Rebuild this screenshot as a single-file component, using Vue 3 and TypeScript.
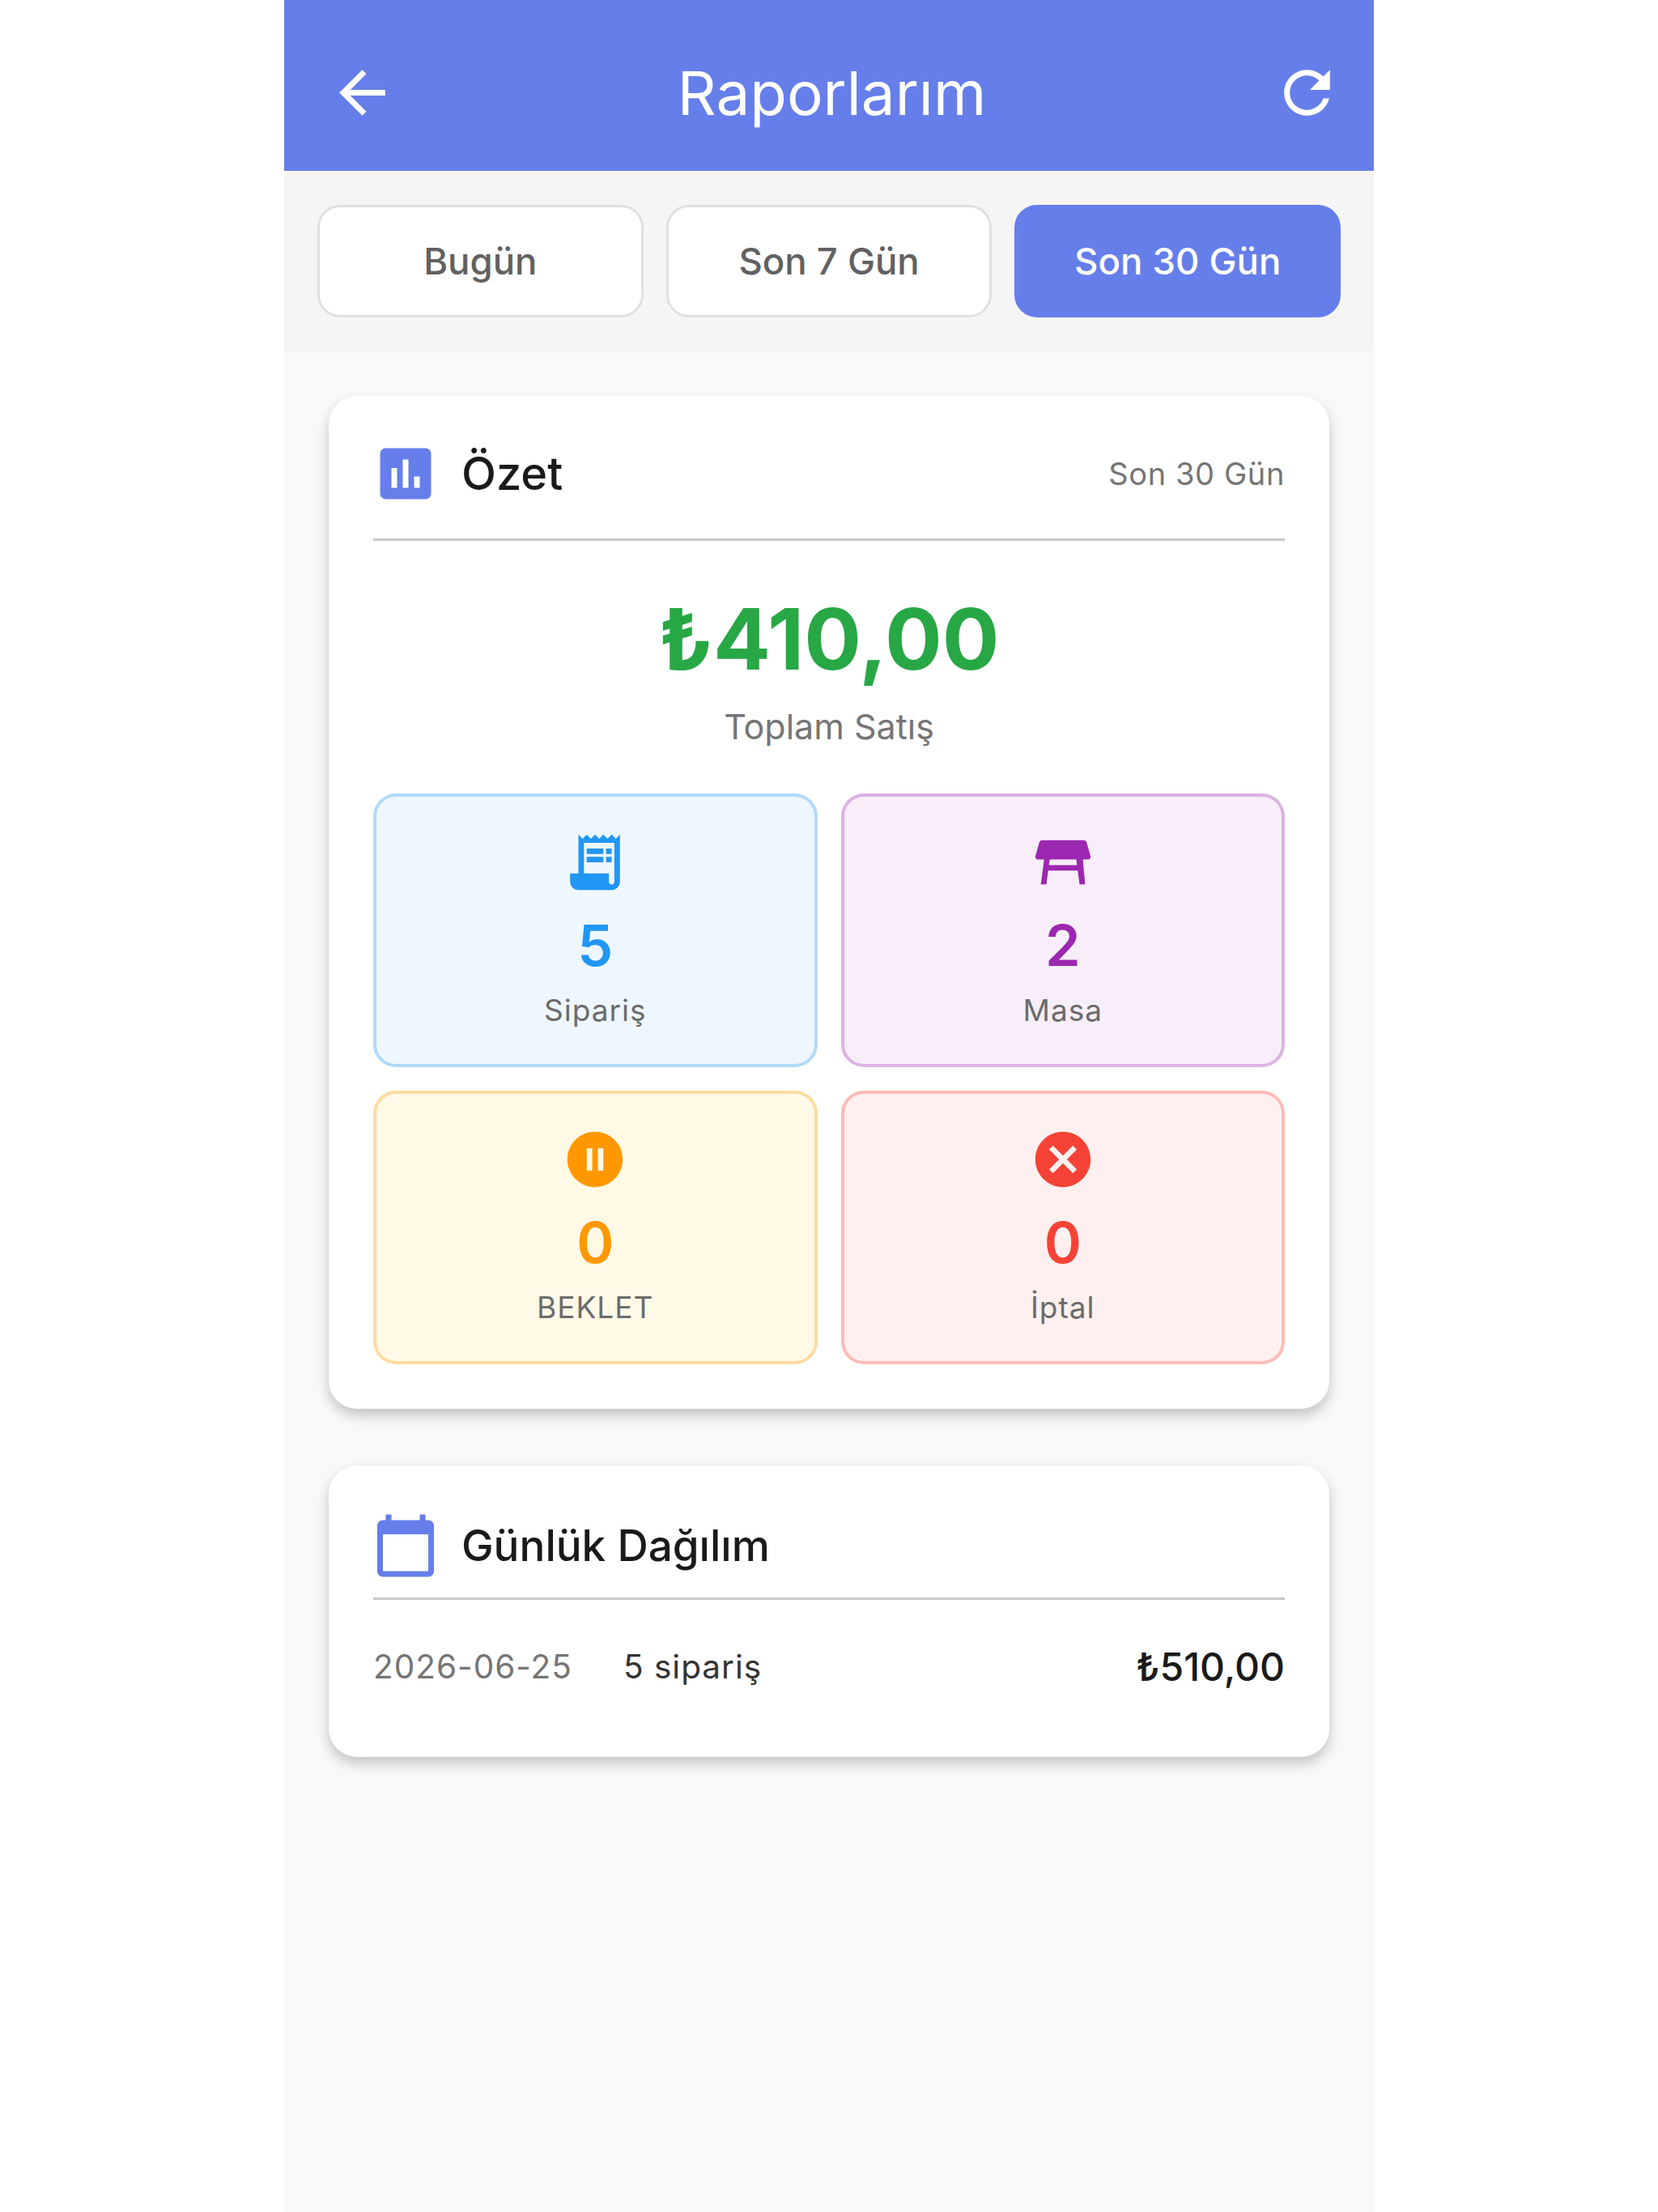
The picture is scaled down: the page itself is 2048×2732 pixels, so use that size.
<script setup lang="ts">
interface Tile {
  label: string
  value: number
  tone: string
  icon: string
}

const PERIODS = ['Bugün', 'Son 7 Gün', 'Son 30 Gün']

const tiles: Tile[] = [
  {
    label: 'Sipariş',
    value: 5,
    tone: 'blue',
    icon: 'M19.5 3.5 18 2l-1.5 1.5L15 2l-1.5 1.5L12 2l-1.5 1.5L9 2 7.5 3.5 6 2v14H3v3c0 1.66 1.34 3 3 3h12c1.66 0 3-1.34 3-3V2l-1.5 1.5zM19 19c0 .55-.45 1-1 1s-1-.45-1-1v-3H8V5h11v14zM9 7h6v2H9zM16 7h2v2h-2zM9 10h6v2H9zM16 10h2v2h-2z'
  },
  {
    label: 'Masa',
    value: 2,
    tone: 'purple',
    icon: 'M21.96 9.73l-1.43-5c-.12-.43-.51-.73-.96-.73H4.43c-.45 0-.84.3-.96.73l-1.43 5c-.18.63.3 1.27.96 1.27h2.2L4 20h2l.67-5h10.67l.66 5h2l-.8-9H21c.66 0 1.14-.64.96-1.27zM6.93 13l.27-2h9.6l.27 2H6.93z'
  },
  {
    label: 'BEKLET',
    value: 0,
    tone: 'orange',
    icon: 'M12 2C6.48 2 2 6.48 2 12s4.48 10 10 10 10-4.48 10-10S17.52 2 12 2zm-1 14H9V8h2v8zm4 0h-2V8h2v8z'
  },
  {
    label: 'İptal',
    value: 0,
    tone: 'red',
    icon: 'M12 2C6.47 2 2 6.47 2 12s4.47 10 10 10 10-4.47 10-10S17.53 2 12 2zm5 13.59L15.59 17 12 13.41 8.41 17 7 15.59 10.59 12 7 8.41 8.41 7 12 10.59 15.59 7 17 8.41 13.41 12 17 15.59z'
  }
]
</script>

<template>
  <div class="phone">
    <header class="appbar">
      <svg class="appbar-icon" viewBox="0 0 24 24"><path d="M20 11H7.83l5.59-5.59L12 4l-8 8 8 8 1.41-1.41L7.83 13H20v-2z" /></svg>
      <h1 class="appbar-title">Raporlarım</h1>
      <svg class="appbar-icon refresh" viewBox="0 0 24 24"><path d="M17.65 6.35C16.2 4.9 14.21 4 12 4c-4.42 0-7.99 3.58-7.99 8s3.57 8 7.99 8c3.73 0 6.84-2.55 7.73-6h-2.08c-.82 2.33-3.04 4-5.65 4-3.31 0-6-2.69-6-6s2.69-6 6-6c1.66 0 3.14.69 4.22 1.78L13 11h7V4l-2.35 2.35z" /></svg>
    </header>

    <div class="periods">
      <button
        v-for="(period, i) in PERIODS"
        :key="period"
        class="period"
        :class="{ active: i === 2 }"
      >
        {{ period }}
      </button>
    </div>

    <main class="content">
      <section class="card">
        <div class="card-head">
          <svg class="card-icon" viewBox="0 0 24 24"><path d="M19 3H5c-1.1 0-2 .9-2 2v14c0 1.1.9 2 2 2h14c1.1 0 2-.9 2-2V5c0-1.1-.9-2-2-2zM9 17H7v-7h2v7zm4 0h-2V7h2v10zm4 0h-2v-4h2v4z" /></svg>
          <h2 class="card-title">Özet</h2>
          <span class="card-note">Son 30 Gün</span>
        </div>

        <div class="total">
          <div class="total-value">₺410,00</div>
          <div class="total-label">Toplam Satış</div>
        </div>

        <div class="tiles">
          <div v-for="tile in tiles" :key="tile.label" class="tile" :class="tile.tone">
            <svg class="tile-icon" viewBox="0 0 24 24"><path :d="tile.icon" /></svg>
            <div class="tile-value">{{ tile.value }}</div>
            <div class="tile-label">{{ tile.label }}</div>
          </div>
        </div>
      </section>

      <section class="card daily">
        <div class="card-head">
          <svg class="card-icon" viewBox="0 0 24 24"><path d="M20 3h-1V1h-2v2H7V1H5v2H4c-1.1 0-2 .9-2 2v16c0 1.1.9 2 2 2h16c1.1 0 2-.9 2-2V5c0-1.1-.9-2-2-2zm0 18H4V8h16v13z" /></svg>
          <h2 class="card-title">Günlük Dağılım</h2>
        </div>
        <div class="day-row">
          <span class="day-date">2026-06-25</span>
          <span class="day-count">5 sipariş</span>
          <span class="day-sum">₺510,00</span>
        </div>
      </section>
    </main>
  </div>
</template>

<style>
body {
  background: #fff;
}
</style>

<style scoped>
.phone {
  width: 1346px;
  min-height: 2732px;
  margin: 0 auto;
  background: #f8f9fa;
  font-family: Inter, "Noto Sans", sans-serif;
}

.appbar {
  display: grid;
  grid-template-columns: 1fr auto 1fr;
  align-items: center;
  height: 211px;
  padding: 18px 40px 0 54px;
  box-sizing: border-box;
  background: #667eea;
}

.appbar-icon {
  width: 85px;
  height: 85px;
  fill: #fff;
}

.refresh {
  justify-self: end;
}

.appbar-title {
  margin: 0 0 0 -7px;
  font-size: 74.5px;
  font-weight: 400;
  color: #fff;
}

.periods {
  display: flex;
  gap: 28px;
  height: 223px;
  padding: 42px 41px;
  box-sizing: border-box;
  background: #f5f5f5;
}

.period {
  flex: 1;
  border: 3px solid #e0e0e0;
  border-radius: 28px;
  background: #fff;
  font-family: inherit;
  font-size: 45.5px;
  font-weight: 500;
  color: #616161;
}

.period.active {
  border-color: #667eea;
  background: #667eea;
  color: #fff;
}

.content {
  display: flex;
  flex-direction: column;
  gap: 70px;
  padding: 55px 55px 0;
}

.card {
  padding: 55px;
  border-radius: 35px;
  background: #fff;
  box-shadow: 0 8px 16px rgba(0, 0, 0, 0.22);
}

.card-head {
  display: flex;
  align-items: center;
  gap: 27px;
  height: 123px;
  margin-top: -21px;
  padding-bottom: 19px;
  border-bottom: 3px solid #c8c8cc;
}

.card-icon {
  width: 84px;
  height: 84px;
  margin-left: -2px;
  fill: #667eea;
}

.card-title {
  margin: 0;
  font-size: 56px;
  font-weight: 500;
  color: #1a1a1a;
}

.card-note {
  margin-left: auto;
  font-size: 38px;
  letter-spacing: 0.6px;
  color: #757575;
}

.total {
  padding-top: 57px;
  text-align: center;
}

.total-value {
  font-size: 105px;
  line-height: 128px;
  font-weight: 700;
  color: #28a745;
}

.total-label {
  margin-top: 18px;
  font-size: 43px;
  line-height: 52px;
  color: #757575;
}

.tiles {
  display: grid;
  grid-template-columns: 1fr 1fr;
  gap: 29px;
  margin-top: 57px;
}

.tile {
  display: flex;
  flex-direction: column;
  align-items: center;
  height: 338px;
  padding-top: 40px;
  box-sizing: border-box;
  border: 4px solid;
  border-radius: 28px;
}

.tile-icon {
  width: 82px;
  height: 82px;
  fill: currentColor;
}

.tile-value {
  margin-top: 20px;
  font-size: 70px;
  line-height: 84px;
  font-weight: 600;
}

.tile-label {
  margin-top: 14px;
  font-size: 37px;
  line-height: 48px;
  letter-spacing: 1px;
  color: #6b6b6b;
}

.blue {
  color: #2196f3;
  border-color: rgba(33, 150, 243, 0.3);
  background: rgba(33, 150, 243, 0.08);
}

.purple {
  color: #9c27b0;
  border-color: rgba(156, 39, 176, 0.3);
  background: rgba(156, 39, 176, 0.08);
}

.orange {
  color: #ff9800;
  border-color: rgba(255, 152, 0, 0.3);
  background: rgba(255, 193, 7, 0.1);
}

.red {
  color: #f44336;
  border-color: rgba(244, 67, 54, 0.3);
  background: rgba(244, 67, 54, 0.08);
}

.daily {
  padding: 43px 55px 30px;
}

.daily .card-head {
  margin-top: 0;
  height: 112px;
  padding-bottom: 8px;
}

.daily .card-title {
  font-size: 53px;
}

.day-row {
  display: flex;
  align-items: center;
  height: 164px;
  font-size: 40.5px;
  letter-spacing: 1px;
}

.day-date {
  color: #757575;
}

.day-count {
  margin-left: 63px;
  color: #333;
}

.day-sum {
  margin-left: auto;
  font-size: 48px;
  font-weight: 500;
  letter-spacing: 0;
  color: #1a1a1a;
}
</style>
